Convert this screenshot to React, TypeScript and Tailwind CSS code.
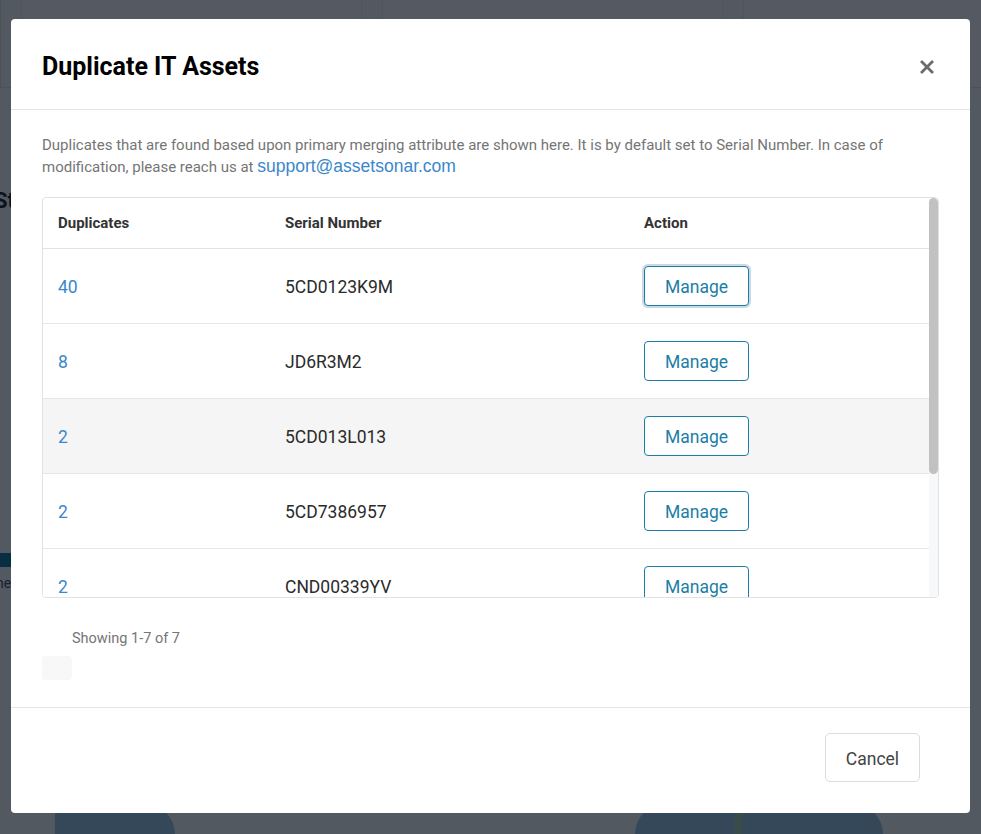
import React from "react";

const duplicates = [
  { count: 40, serial: "5CD0123K9M" },
  { count: 8, serial: "JD6R3M2" },
  { count: 2, serial: "5CD013L013" },
  { count: 2, serial: "5CD7386957" },
  { count: 2, serial: "CND00339YV" },
  { count: 2, serial: "MXL4521B7Q" },
  { count: 2, serial: "CZC3491KTR" },
];

const statCards = [
  "Outdated IT Assets",
  "IT Assets with Invalid Serial Number",
  "Duplicate IT Assets",
];

function HelpDot() {
  return (
    <span className="inline-flex h-4 w-4 items-center justify-center rounded-full bg-[#9aa3ad] text-[10px] font-bold text-white">
      ?
    </span>
  );
}

function BackgroundPage() {
  return (
    <div className="flex h-[834px] flex-col bg-[#f4f5f7] font-['Roboto',sans-serif]">
      {/* Stat cards */}
      <div className="flex h-[88px] border-b border-[#dde1e6]">
        <div className="w-[124px] border-r border-[#dde1e6] bg-[#f0f2f5]" />
        <div className="flex flex-1 gap-[20px] pl-[20px]">
          {statCards.map((label) => (
            <div
              key={label}
              className="flex w-[341px] shrink-0 items-start gap-2 border-x border-[#e3e6ea] bg-[#f8f9fa] px-5 pt-[22px] text-[15px] text-[#333]"
            >
              <span className="whitespace-nowrap">{label}</span>
              <HelpDot />
            </div>
          ))}
        </div>
      </div>

      {/* Section heading */}
      <div className="pt-[96px] text-[22px] font-bold text-[#1f2933]">
        <span className="-ml-[6px]">Status Overview</span>
      </div>

      <div className="mt-[336px] h-[14px] w-[220px] bg-[#1c7a9c]" />
      <div className="pt-[6px] text-[14px] text-[#4b5563]">
        <span className="-ml-[4px]">he latest status</span>
      </div>

      <div className="mt-auto flex h-[30px]">
        <div className="w-[55px] bg-[#f4f5f7]" />
        <div className="w-[120px] rounded-tr-[60px] bg-[#99c4e0]" />
        <div className="w-[460px]" />
        <div className="w-[100px] rounded-tl-[60px] bg-[#99c4e0]" />
        <div className="w-[8px] bg-[#a8cfb4]" />
        <div className="w-[140px] rounded-tr-[60px] bg-[#99c4e0]" />
      </div>
    </div>
  );
}

function CloseIcon() {
  return (
    <svg width="14" height="14" viewBox="0 0 14 14" aria-hidden="true">
      <path
        d="M2 2 L12 12 M12 2 L2 12"
        stroke="#6b6b6b"
        strokeWidth="2.8"
        strokeLinecap="square"
      />
    </svg>
  );
}

function DuplicatesTable() {
  return (
    <div className="mt-[19px] flex h-[401px] overflow-hidden rounded border border-[#e2e2e2]">
      <div className="flex-1 overflow-hidden">
        <div className="grid h-[51px] grid-cols-[227px_359px_1fr] items-center border-b border-[#e2e2e2] text-[15px] font-bold text-[#333]">
          <div className="px-[15px]">Duplicates</div>
          <div className="px-[15px]">Serial Number</div>
          <div className="px-[15px]">Action</div>
        </div>
        {duplicates.map((row, i) => (
          <div
            key={row.serial}
            className={`grid h-[75px] grid-cols-[227px_359px_1fr] items-center border-b border-[#e6e6e6] text-[17.5px] ${
              i === 2 ? "bg-[#f5f5f5]" : "bg-white"
            }`}
          >
            <div className="px-[15px] pt-[2px] text-[#3b87c9]">{row.count}</div>
            <div className="px-[15px] pt-[2px] text-[#2b2b2b]">{row.serial}</div>
            <div className="px-[15px]">
              <button
                className={`h-[40px] w-[105px] rounded border border-[#1b7ea6] bg-white pt-[2px] text-[17.5px] text-[#1b7ea6] ${
                  i === 0 ? "ring-2 ring-[#c9dae2]" : ""
                }`}
              >
                Manage
              </button>
            </div>
          </div>
        ))}
      </div>
      {/* scrollbar */}
      <div className="w-[9px] shrink-0 bg-[#f7f8f9]">
        <div className="h-[276px] rounded-full bg-[#c1c1c1]" />
      </div>
    </div>
  );
}

export default function App() {
  return (
    <div className="relative h-[834px] overflow-hidden">
      <BackgroundPage />

      {/* Overlay + modal */}
      <div className="absolute inset-0 flex justify-center bg-[rgba(0,8,19,0.66)] pt-[19px] font-['Roboto',sans-serif]">
        <div className="flex h-[794px] w-[959px] flex-col rounded bg-white">
          {/* Header */}
          <div className="flex h-[91px] shrink-0 items-center justify-between border-b border-[#e5e5e5] pl-[31px] pr-[31px] pt-[5px]">
            <h2 className="text-[25px] font-bold text-black">
              Duplicate IT Assets
            </h2>
            <button className="flex h-6 w-6 items-center justify-center">
              <CloseIcon />
            </button>
          </div>

          {/* Body */}
          <div className="flex-1 px-[31px] pt-[25px]">
            <p className="pr-[10px] text-[15px] leading-[21px] text-[#757575]">
              Duplicates that are found based upon primary merging attribute are
              shown here. It is by default set to Serial Number. In case of
              modification, please reach us at{" "}
              <a
                href="#"
                className="font-['Liberation_Sans',Arial,sans-serif] text-[17.5px] text-[#3b87c9]"
              >
                support@assetsonar.com
              </a>
            </p>

            <DuplicatesTable />

            <div className="pl-[30px] pt-[31px] text-[14.5px] leading-[20px] text-[#757575]">
              Showing 1-7 of 7
            </div>
            <div className="mt-[7px] h-[24px] w-[30px] rounded-sm bg-[#f8f8f8]" />
          </div>

          {/* Footer */}
          <div className="flex h-[106px] shrink-0 items-start justify-end border-t border-[#e5e5e5] pr-[50px] pt-[25px]">
            <button className="h-[49px] w-[95px] rounded-[5px] border border-[#dcdcdc] bg-white pt-[3px] text-[17.5px] text-[#444]">
              Cancel
            </button>
          </div>
        </div>
      </div>
    </div>
  );
}
